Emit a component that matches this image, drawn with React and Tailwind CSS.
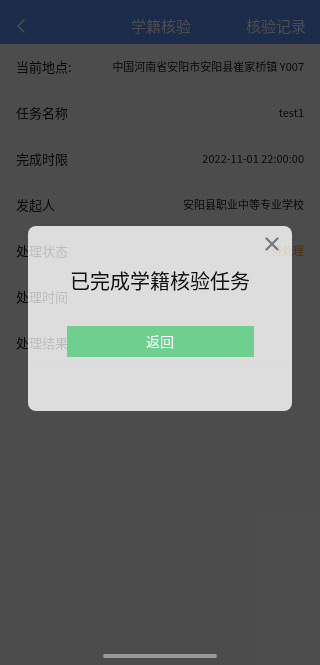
import React from 'react';

const rows = [
    { label: '当前地点:', value: '中国河南省安阳市安阳县崔家桥镇 Y007' },
    { label: '任务名称', value: 'test1' },
    { label: '完成时限', value: '2022-11-01 22:00:00' },
    { label: '发起人', value: '安阳县职业中等专业学校' },
    { label: '处理状态', value: '待处理', orange: true },
    { label: '处理时间', value: '' },
    { label: '处理结果', value: '' },
];

const App = () => {
    return (
        <div
            className="relative w-[320px] h-[665px] overflow-hidden bg-white"
            style={{ fontFamily: '"Noto Sans CJK SC", "Noto Sans", sans-serif' }}
        >
            {/* header */}
            <div className="h-[44px] bg-[#5b8ff9] text-white flex items-end pb-[6px] px-[16px]">
                <div className="w-[60px] flex items-center h-[24px]">
                    <svg width="10" height="16" viewBox="0 0 10 16" fill="none">
                        <path d="M8 2L2 8l6 6" stroke="currentColor" strokeWidth="1.6" strokeLinecap="round" strokeLinejoin="round" />
                    </svg>
                </div>
                <div className="flex-1 text-center text-[15px] leading-[24px] pl-[24px]">学籍核验</div>
                <div className="w-[84px] text-right text-[15px] leading-[24px] -mr-[2px]">核验记录</div>
            </div>

            {/* list */}
            <div className="px-[16px]">
                {rows.map((r) => (
                    <div key={r.label} className="h-[46px] flex items-center justify-between border-b border-[#f8f8f8]">
                        <span className="text-[13px] text-[#222]">{r.label}</span>
                        <span className={`text-[11px] ${r.orange ? 'text-[#f5a027]' : 'text-[#222]'}`}>{r.value}</span>
                    </div>
                ))}
            </div>

            {/* mask */}
            <div className="absolute inset-0 bg-black/70" />

            {/* dialog */}
            <div className="absolute left-[28px] top-[226px] w-[264px] h-[185px] rounded-[8px] [backdrop-filter:contrast(0.25)_brightness(1.93)] flex flex-col items-center">
                <button className="absolute right-[13px] top-[11px] text-[#777]">
                    <svg width="14" height="14" viewBox="0 0 14 14">
                        <path d="M1.5 1.5l11 11M12.5 1.5l-11 11" stroke="currentColor" strokeWidth="2.2" strokeLinecap="round" />
                    </svg>
                </button>
                <div className="mt-[41px] text-[20px] leading-[28px] text-[#111]">已完成学籍核验任务</div>
                <button className="mt-[31px] w-[187px] h-[31px] bg-[#6ecf8e] text-white text-[14px]">返回</button>
            </div>

            {/* home indicator */}
            <div className="absolute left-[103px] bottom-[7px] w-[114px] h-[4px] rounded-full bg-[#9a9a9a]" />
        </div>
    );
};

export default App;
